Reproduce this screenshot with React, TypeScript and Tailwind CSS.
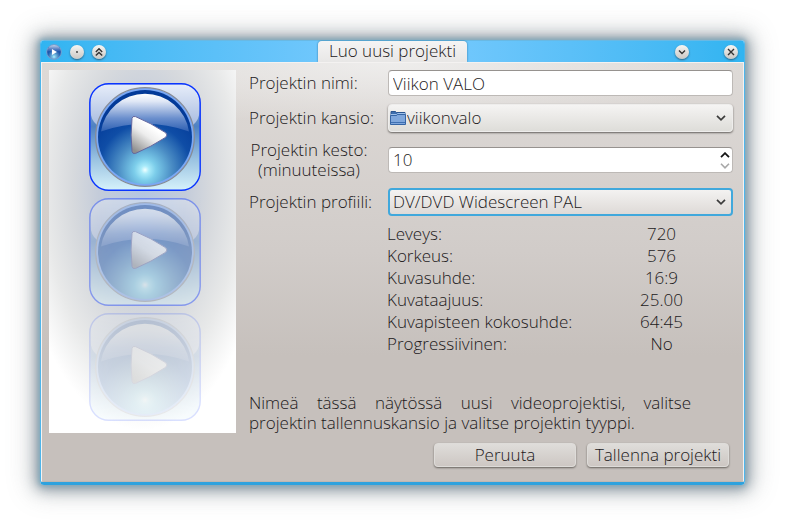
import type { ReactNode } from 'react';

const profileDetails = [
  ['Leveys:', '720'],
  ['Korkeus:', '576'],
  ['Kuvasuhde:', '16:9'],
  ['Kuvataajuus:', '25.00'],
  ['Kuvapisteen kokosuhde:', '64:45'],
  ['Progressiivinen:', 'No'],
];

function PlayDefs() {
  return (
    <svg className="absolute size-0" aria-hidden="true">
      <defs>
        <linearGradient id="tile" x1="0" y1="0" x2="0" y2="1">
          <stop offset="0" stopColor="#a9c0e8" />
          <stop offset="0.4" stopColor="#4f82c2" />
          <stop offset="0.72" stopColor="#9cc4e2" />
          <stop offset="1" stopColor="#d6f2fb" />
        </linearGradient>
        <linearGradient id="gloss" x1="0" y1="0" x2="0" y2="1">
          <stop offset="0" stopColor="#e6edf9" />
          <stop offset="1" stopColor="#a9bce0" />
        </linearGradient>
        <radialGradient id="ball" cx="0.5" cy="0.85" r="0.72">
          <stop offset="0" stopColor="#f2ffff" />
          <stop offset="0.06" stopColor="#a9ebfa" />
          <stop offset="0.16" stopColor="#7ccdea" />
          <stop offset="0.4" stopColor="#4a8cc4" />
          <stop offset="0.68" stopColor="#0f4da6" />
          <stop offset="1" stopColor="#033a98" />
        </radialGradient>
        <linearGradient id="ballGloss" x1="0" y1="0" x2="0" y2="1">
          <stop offset="0" stopColor="#ffffff" />
          <stop offset="0.2" stopColor="#e1e8f6" />
          <stop offset="0.65" stopColor="#6b8fcd" />
          <stop offset="1" stopColor="#2d5fb2" />
        </linearGradient>
        <linearGradient id="arrow" x1="0.6" y1="0.3" x2="0.15" y2="0.95">
          <stop offset="0" stopColor="#ffffff" />
          <stop offset="0.35" stopColor="#ededed" />
          <stop offset="1" stopColor="#8f8f8f" />
        </linearGradient>
      </defs>
    </svg>
  );
}

function PlayTile({ className }: { className: string }) {
  return (
    <svg viewBox="0 0 112 108" className={`h-[108px] w-28 ${className}`} aria-hidden="true">
      <rect x="0.8" y="0.8" width="110.4" height="106.4" rx="19" fill="url(#tile)" />
      <path d="M1.5 20Q1.5 1.5 20 1.5H92Q110.500 1.5 110.500 20V27Q110.500 37 104 42H8Q1.500 37 1.500 27Z" fill="url(#gloss)" />
      <rect x="0.8" y="0.8" width="110.4" height="106.4" rx="19" fill="none" stroke="#0a35ff" strokeWidth="1.4" />
      <circle cx="56" cy="54" r="49.300" fill="#7ba8f4" stroke="#878c96" strokeWidth="1.300" />
      <circle cx="56" cy="54" r="47" fill="url(#ball)" />
      <path d="M12 48.500A44.500 44.500 0 0 1 100 48.500Q56 33 12 48.500Z" fill="url(#ballGloss)" />
      <path d="M43 35.500Q43.300 32.600 46.500 33.600Q62 40 76.500 49.600Q79.500 52 76.500 54.400Q62 64 46.500 70.400Q43.300 71.200 43 68.500Q41.200 52 43 35.500Z" fill="url(#arrow)" stroke="#6467a0" strokeWidth="1" />
    </svg>
  );
}

function AppIcon() {
  return (
    <svg viewBox="0 0 108 108" className="size-4" aria-hidden="true">
      <circle cx="54" cy="54" r="50" fill="#6f9bd6" stroke="#7d9cc8" strokeWidth="5" />
      <circle cx="54" cy="54" r="46" fill="url(#ball)" opacity="0.85" />
      <path d="M8 52A46 46 0 0 1 100 52Q54 38 8 52Z" fill="url(#ballGloss)" opacity="0.7" />
      <path d="M40 34L74 54L40 74Z" fill="#ffffff" />
    </svg>
  );
}

function TitleButton({ label, children }: { label: string; children: ReactNode }) {
  return (
    <button
      type="button"
      aria-label={label}
      className="flex size-3.5 items-center justify-center rounded-full bg-linear-to-b from-[#f6f6f4] to-[#cbc8c4] shadow-[0_1px_2px_#2c5f7d]"
    >
      <svg viewBox="0 0 14 14" className="size-3.5" fill="none" stroke="#333333" strokeWidth="1.400" aria-hidden="true">
        {children}
      </svg>
    </button>
  );
}

function Chevron() {
  return (
    <svg viewBox="0 0 10 6" className="pointer-events-none absolute right-[7px] top-1/2 h-1.5 w-2.5 -translate-y-1/2" fill="none" stroke="#3c3c3c" strokeWidth="1.700" aria-hidden="true">
      <path d="M1 0.800L5 4.800L9 0.800" />
    </svg>
  );
}

function Folder() {
  return (
    <svg viewBox="0 0 16 16" className="pointer-events-none absolute left-0.5 top-1/2 size-4 -translate-y-1/2" aria-hidden="true">
      <path d="M1 13.500V1.500H5.500L6.500 2.500H15V13.500Z" fill="#3d6eae" stroke="#2a5590" />
      <path d="M1 4.500H6.500L7.500 3.500H15" fill="none" stroke="#9dc0ea" />
      <path d="M0.500 5.500H6.500L7.500 4.500H15.500V14.500H0.500Z" fill="#7fa7dc" stroke="#3565a5" />
      <path d="M1 12.500H15" stroke="#3f70b2" />
    </svg>
  );
}

function PushButton({ children }: { children: ReactNode }) {
  return (
    <button
      type="button"
      className="h-6 w-[142px] rounded-[4px] border border-[#dedcd9] bg-linear-to-b from-[#dfddda] to-[#cdc7c3] text-center leading-5 whitespace-nowrap shadow-[0_1px_2px_#68645f]"
    >
      {children}
    </button>
  );
}

export default function App() {
  return (
    <div className="flex min-h-screen flex-col bg-white py-10 pr-10 pl-10 font-['Open_Sans','Noto_Sans',sans-serif] text-[17px] leading-5 font-light text-[#1c191b]">
      <PlayDefs />
      <div className="flex grow flex-col overflow-hidden rounded-[4px] border-x border-b-[3px] border-x-[#4fb5ea] border-b-[#2da2de] shadow-[0_0_5px_1px_#7daabf,0_1px_13px_4px_rgba(62,86,104,0.500),0_0_26px_8px_rgba(110,118,122,0.320)]">
        <header className="grid h-[22px] grid-cols-[1fr_auto_1fr] items-center border-t border-[#69b9e4] bg-linear-to-r from-[#30b4f1] via-[#7cccff] to-[#30b4f1]">
          <div className="flex items-center gap-2 pl-[5px]">
            <AppIcon />
            <TitleButton label="Kaikille työpöydille">
              <circle cx="7" cy="7" r="0.900" fill="#333333" stroke="none" />
            </TitleButton>
            <TitleButton label="Pidä muiden yllä">
              <path d="M3.800 7L7 3.800L10.200 7M3.800 10.600L7 7.400L10.200 10.600" />
            </TitleButton>
          </div>
          <h1 className="h-[21px] w-[149px] rounded-t-[4px] bg-linear-to-b from-[#f5f4f4] to-[#e8e7e6] text-center leading-5 font-light shadow-[0_0_2px_#246b94]">
            Luo uusi projekti
          </h1>
          <div className="flex items-center justify-end gap-[35px] pr-1.5">
            <TitleButton label="Pienennä">
              <path d="M4 5.600L7 8.600L10 5.600" />
            </TitleButton>
            <TitleButton label="Sulje">
              <path d="M4 4L10 10M10 4L4 10" />
            </TitleButton>
          </div>
        </header>

        <main className="relative flex grow border border-[#f4f2f1] border-b-[#bdb7b2] bg-linear-to-b from-[#dedad7] via-[#d1ccc9] via-45% to-[#c6c0bc] to-70% pt-[7px] pr-1.5 pb-3.5 pl-[7px]">
          <div className="pointer-events-none absolute inset-x-0 top-0 h-16 bg-[radial-gradient(ellipse_50%_100%_at_50%_0%,#eeedec,transparent)]" />
          <aside className="relative flex h-[363px] w-[187px] shrink-0 flex-col items-center gap-[7px] bg-white bg-[radial-gradient(ellipse_125px_240px_at_50%_33%,#b4c6e2_0%,#c4ccda_35%,#d6d9dd_55%,#e8e9e9_77%,#ffffff_100%)] pt-[13px] pl-1">
            <PlayTile className="opacity-100" />
            <PlayTile className="opacity-40" />
            <PlayTile className="opacity-15" />
          </aside>

          <form className="relative flex grow flex-col pr-1 pl-[13px]" onSubmit={(event) => event.preventDefault()}>
            <div className="grid grid-cols-[139px_1fr] items-center">
              <label htmlFor="name">Projektin nimi:</label>
              <input
                id="name"
                type="text"
                defaultValue="Viikon VALO"
                className="h-[26px] w-full rounded-[4px] border border-[#bdb9b6] border-t-[#96928f] bg-white px-1 outline-none"
              />

              <label htmlFor="folder" className="mt-2">Projektin kansio:</label>
              <div className="relative mt-2 rounded-[4px] shadow-[0_1px_2px_#65615e]">
                <select
                  id="folder"
                  className="block h-7 w-full appearance-none rounded-[4px] border border-[#eeedec] bg-linear-to-b from-[#f5f4f3] to-[#deddd9] pr-6 pl-[18px] outline-none"
                >
                  <option>viikonvalo</option>
                </select>
                <Folder />
                <Chevron />
              </div>

              <label htmlFor="length" className="mt-2 w-[120px] text-center">
                Projektin kesto: (minuuteissa)
              </label>
              <div className="mt-2 flex h-[26px] overflow-hidden rounded-[4px] border border-[#bdb9b6] border-t-[#96928f] bg-white">
                <input
                  id="length"
                  type="text"
                  inputMode="numeric"
                  defaultValue="10"
                  className="min-w-0 grow px-1 outline-none"
                />
                <div className="flex w-3 flex-col justify-center gap-[5px]">
                  <button type="button" aria-label="Lisää">
                    <svg viewBox="0 0 10 6" className="block h-1.5 w-2.5" fill="none" stroke="#151515" strokeWidth="1.800" aria-hidden="true">
                      <path d="M1 5.200L5 1.200L9 5.200" />
                    </svg>
                  </button>
                  <button type="button" aria-label="Vähennä">
                    <svg viewBox="0 0 10 6" className="block h-1.5 w-2.5" fill="none" stroke="#a8a8a8" strokeWidth="1.600" aria-hidden="true">
                      <path d="M1 0.800L5 4.800L9 0.800" />
                    </svg>
                  </button>
                </div>
              </div>

              <label htmlFor="profile" className="mt-2">Projektin profiili:</label>
              <div className="relative mt-2">
                <select
                  id="profile"
                  className="block h-7 w-full appearance-none rounded-[4px] border-2 border-[#40a8dc] bg-linear-to-b from-[#f3f2f1] to-[#dedad7] pr-6 pl-[3px] outline-none"
                >
                  <option>DV/DVD Widescreen PAL</option>
                </select>
                <Chevron />
              </div>
            </div>

            <table className="mt-[7px] ml-[138px] border-collapse">
              <tbody>
                {profileDetails.map(([name, value]) => (
                  <tr key={name} className="h-[22px]">
                    <th scope="row" className="w-[203px] p-0 text-left font-light whitespace-nowrap">{name}</th>
                    <td className="p-0 text-center">{value}</td>
                  </tr>
                ))}
              </tbody>
            </table>

            <p className="mt-auto pr-[42px] pb-2.5 text-justify">
              Nimeä tässä näytössä uusi videoprojektisi, valitse projektin tallennuskansio ja valitse projektin tyyppi.
            </p>
            <div className="flex justify-end gap-[11px] pr-1">
              <PushButton>Peruuta</PushButton>
              <PushButton>Tallenna projekti</PushButton>
            </div>
          </form>
        </main>
      </div>
    </div>
  );
}
